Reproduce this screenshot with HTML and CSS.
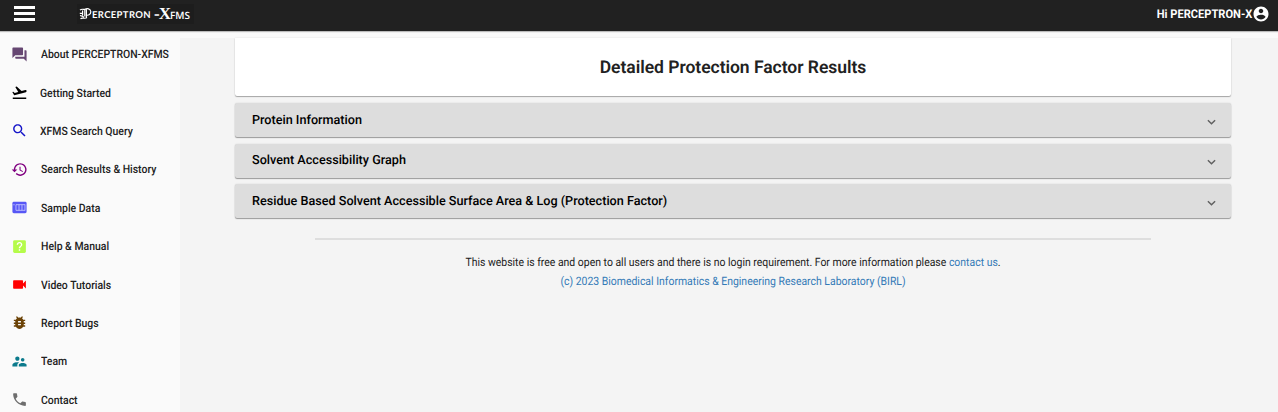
FILE: index.html
```html
<!DOCTYPE html>
<html lang="en">
<head>
<meta charset="utf-8">
<title>Detailed Protection Factor Results</title>
<link rel="stylesheet" href="styles.css">
</head>
<body>
<header class="topbar">
  <div class="brand">
    <div class="menu"><span></span><span></span><span></span></div>
    <div class="logo"><svg class="logo-p" viewBox="0 0 13 12"><path d="M1 2.200C3 .2 4.500 2 6 1.200c2-1 5.500-.8 5.800 2.300C12 6.500 9.500 7.500 7.300 7.200M5.800 1.500v7M7.400 1.500v8.300M3.600 2.500v5M.800 5.300h3M1 7.800c1.500-.5 2.500 1 4 1M1.500 10.800c2-2 4 .6 6.500-1.200"/></svg><span class="logo-name">ERCEPTRON</span><span class="logo-x">-X</span><span class="logo-fms">FMS</span></div>
  </div>
  <div class="user"><span>Hi PERCEPTRON-X</span><svg viewBox="0 0 24 24"><path d="M12 2C6.480 2 2 6.480 2 12s4.480 10 10 10 10-4.480 10-10S17.520 2 12 2zm0 3c1.660 0 3 1.340 3 3s-1.340 3-3 3-3-1.340-3-3 1.340-3 3-3zm0 14.200c-2.500 0-4.710-1.280-6-3.220.03-1.990 4-3.080 6-3.080 1.990 0 5.970 1.090 6 3.080-1.290 1.940-3.500 3.220-6 3.220z"/></svg></div>
</header>
<div class="layout">
  <nav class="sidebar">
    <a class="item about"><svg viewBox="0 0 24 24"><path d="M21 6h-2v9H6v2c0 .55.45 1 1 1h11l4 4V7c0-.55-.45-1-1-1zm-4 6V3c0-.55-.45-1-1-1H3c-.55 0-1 .45-1 1v14l4-4h10c.55 0 1-.45 1-1z"/></svg><span>About PERCEPTRON-XFMS</span></a>
    <a class="item start"><svg viewBox="0 0 24 24"><path d="M2.500 19h19v2h-19zm19.570-9.360c-.21-.8-1.040-1.280-1.840-1.060L14.920 10l-6.900-6.430-1.930.51 4.140 7.170-4.970 1.330-1.970-1.540-1.450.39 1.820 3.160.77 1.330 1.600-.43 5.310-1.420 4.350-1.160L21 11.490c.81-.23 1.280-1.050 1.070-1.850z"/></svg><span>Getting Started</span></a>
    <a class="item search"><svg viewBox="0 0 24 24"><path d="M15.500 14h-.79l-.28-.27C15.410 12.590 16 11.110 16 9.500 16 5.910 13.090 3 9.500 3S3 5.910 3 9.500 5.910 16 9.500 16c1.610 0 3.090-.59 4.230-1.570l.27.28v.79l5 4.990L20.490 19l-4.990-5zm-6 0C7.010 14 5 11.990 5 9.500S7.010 5 9.500 5 14 7.010 14 9.500 11.990 14 9.500 14z"/></svg><span>XFMS Search Query</span></a>
    <a class="item history"><svg viewBox="0 0 24 24"><path d="M13 3c-4.970 0-9 4.030-9 9H1l3.890 3.890.07.14L9 12H6c0-3.870 3.130-7 7-7s7 3.130 7 7-3.130 7-7 7c-1.930 0-3.680-.79-4.940-2.060l-1.420 1.420C8.270 19.990 10.510 21 13 21c4.970 0 9-4.030 9-9s-4.030-9-9-9zm-1 5v5l4.280 2.540.72-1.210-3.500-2.080V8H12z"/></svg><span>Search Results &amp; History</span></a>
    <a class="item sample"><svg viewBox="0 0 24 24"><rect x="2" y="4" width="20" height="16" rx="2"/><path class="cut" d="M4.200 7v2M7 8v8M7 8h13M7 16h13M11.300 8v8M15.500 8v8M19.700 8v8"/></svg><span>Sample Data</span></a>
    <a class="item help"><svg viewBox="0 0 24 24"><rect x="3" y="3" width="18" height="18" rx="2"/><path class="mark" d="M11 16h2v2h-2zM12 5.500c-2.210 0-4 1.790-4 4h2c0-1.100.9-2 2-2s2 .9 2 2c0 2-3 1.750-3 5h2c0-2.250 3-2.500 3-5 0-2.210-1.790-4-4-4z"/></svg><span>Help &amp; Manual</span></a>
    <a class="item video"><svg viewBox="0 0 24 24"><path d="M17 10.500V7c0-.55-.45-1-1-1H4c-.55 0-1 .45-1 1v10c0 .55.45 1 1 1h12c.55 0 1-.45 1-1v-3.500l4 4v-11l-4 4z"/></svg><span>Video Tutorials</span></a>
    <a class="item bugs"><svg viewBox="0 0 24 24"><path d="M20 8h-2.810c-.45-.78-1.070-1.450-1.820-1.960L17 4.410 15.590 3l-2.170 2.170C12.960 5.060 12.490 5 12 5c-.49 0-.96.06-1.410.17L8.410 3 7 4.410l1.620 1.630C7.880 6.550 7.260 7.220 6.810 8H4v2h2.090c-.05.33-.09.66-.09 1v1H4v2h2v1c0 .34.04.67.09 1H4v2h2.810c1.040 1.790 2.970 3 5.190 3s4.150-1.210 5.190-3H20v-2h-2.090c.05-.33.09-.66.09-1v-1h2v-2h-2v-1c0-.34-.04-.67-.09-1H20V8zm-6 8h-4v-2h4v2zm0-4h-4v-2h4v2z"/></svg><span>Report Bugs</span></a>
    <a class="item team"><svg viewBox="0 0 24 24"><path d="M16.500 12c1.380 0 2.490-1.120 2.490-2.500S17.880 7 16.500 7C15.120 7 14 8.120 14 9.500s1.120 2.500 2.500 2.500zM9 11c1.660 0 2.990-1.340 2.990-3S10.660 5 9 5C7.340 5 6 6.340 6 8s1.340 3 3 3zm7.500 3c-1.830 0-5.500.92-5.500 2.750V19h11v-2.250c0-1.830-3.670-2.750-5.500-2.750zM9 13c-2.330 0-7 1.170-7 3.500V19h7v-2.250c0-.85.33-2.340 2.370-3.470C10.500 13.100 9.660 13 9 13z"/></svg><span>Team</span></a>
    <a class="item contact"><svg viewBox="0 0 24 24"><path d="M6.620 10.790c1.440 2.830 3.760 5.140 6.590 6.590l2.200-2.200c.27-.27.67-.36 1.020-.24 1.120.37 2.330.57 3.570.57.55 0 1 .45 1 1V20c0 .55-.45 1-1 1-9.390 0-17-7.610-17-17 0-.55.45-1 1-1h3.500c.55 0 1 .45 1 1 0 1.250.2 2.450.57 3.570.11.35.03.74-.25 1.020l-2.200 2.200z"/></svg><span>Contact</span></a>
  </nav>
  <main class="content">
    <h1 class="title">Detailed Protection Factor Results</h1>
    <section class="panel"><span>Protein Information</span><svg viewBox="0 0 10 7"><path d="M1 1l4 4 4-4"/></svg></section>
    <section class="panel"><span>Solvent Accessibility Graph</span><svg viewBox="0 0 10 7"><path d="M1 1l4 4 4-4"/></svg></section>
    <section class="panel"><span>Residue Based Solvent Accessible Surface Area &amp; Log (Protection Factor)</span><svg viewBox="0 0 10 7"><path d="M1 1l4 4 4-4"/></svg></section>
    <footer class="footer">
      <p>This website is free and open to all users and there is no login requirement. For more information please <a>contact us</a>.</p>
      <p><a>(c) 2023 Biomedical Informatics &amp; Engineering Research Laboratory (BIRL)</a></p>
    </footer>
  </main>
</div>
</body>
</html>
```
FILE: styles.css
```css
* { box-sizing: border-box; }
body { margin: 0; height: 412px; overflow: hidden; background: #fafafa; font-family: Roboto, "Liberation Sans", sans-serif; color: #212121; text-rendering: geometricPrecision; }
.topbar { height: 31px; background: #212121; color: #fff; display: flex; justify-content: space-between; padding: 0 8px 0 14px; box-shadow: 0 1px 1px rgba(0,0,0,.25); }
.brand { display: flex; }
.menu { width: 21px; display: flex; flex-direction: column; gap: 4px; padding-top: 6px; }
.menu span { height: 2.500px; background: #fff; }
.menu { gap: 3.500px; }
.logo { margin: 4px 0 0 42px; width: 117px; height: 20px; background: #1d1d1d; padding-left: 2px; display: flex; align-items: baseline; line-height: 20px; white-space: nowrap; }
.logo-p { width: 13px; height: 12px; fill: none; stroke: #fff; stroke-width: 1.2; align-self: flex-start; margin-top: 4px; }
.logo-name { font: 700 9.500px/18px Lato, "Open Sans", sans-serif; width: 62px; letter-spacing: .35px; position: relative; top: -1px; }
.logo-x { font: bold 17px/20px "Liberation Serif", serif; width: 16px; letter-spacing: -.8px; }
.logo-fms { font: 600 10px/20px "Open Sans", sans-serif; }
.user { display: flex; align-items: center; font-size: 12px; font-weight: 700; height: 28px; }
.user span { transform: scaleX(.925); transform-origin: right; }
.user svg { width: 18px; height: 18px; fill: #fff; }
.layout { display: flex; height: 381px; }
.sidebar { width: 180px; flex: none; padding-top: 4px; }
.item { height: 38.400px; display: flex; align-items: center; padding-left: 10.500px; font-size: 11.600px; font-weight: 500; white-space: nowrap; }
.item svg { width: 17px; height: 17px; margin-right: 13px; fill: currentColor; flex: none; }
.item span { color: #212121; transform: scaleX(.9); transform-origin: left; }
.about { color: #664772; }
.start { color: #000; }
.start span, .search span { margin-left: -1px; }
.search { color: #1414c8; }
.history { color: #800080; }
.sample { color: #5757f5; }
.help { color: #b5fb4a; }
.video { color: #f00; }
.bugs { color: #6b4206; }
.team { color: #0b7a8c; }
.contact { color: #6e6e6e; }
.cut { fill: none; stroke: #c4c4ff; stroke-width: 1.2; }
.mark { fill: #fff; }
.content { flex: 1; margin-top: 7px; background: #f4f4f4; padding: 0 47px 0 55px; }
.title { margin: 0 0 7px; height: 58px; background: #fff; font-size: 17.500px; line-height: 60px; font-weight: 600; letter-spacing: -.03px; text-align: center; border-radius: 0 0 2px 2px; box-shadow: 0 1px 1px rgba(0,0,0,.3), 0 0 2px rgba(0,0,0,.12); }
.panel { height: 34px; margin-bottom: 6.500px; background: #ddd; border-radius: 2px; padding: 0 15px 0 17px; display: flex; align-items: center; justify-content: space-between; font-size: 12.630px; font-weight: 500; color: #000; box-shadow: 0 1px 1px rgba(0,0,0,.35), 0 0 2px rgba(0,0,0,.12); }
.panel span { padding-top: 1px; line-height: 14px; }
.panel svg { width: 9px; height: 7px; margin-top: 4px; fill: none; stroke: #606060; stroke-width: 1.600; }
.footer { width: 836px; margin: 20.300px auto 0 80px; border-top: 2px solid #dedede; padding-top: 13px; text-align: center; font-size: 11.600px; }
.footer p { margin: 0; height: 19px; line-height: 19px; white-space: nowrap; transform: scaleX(.901); }
.footer a { color: #337ab7; }
```
